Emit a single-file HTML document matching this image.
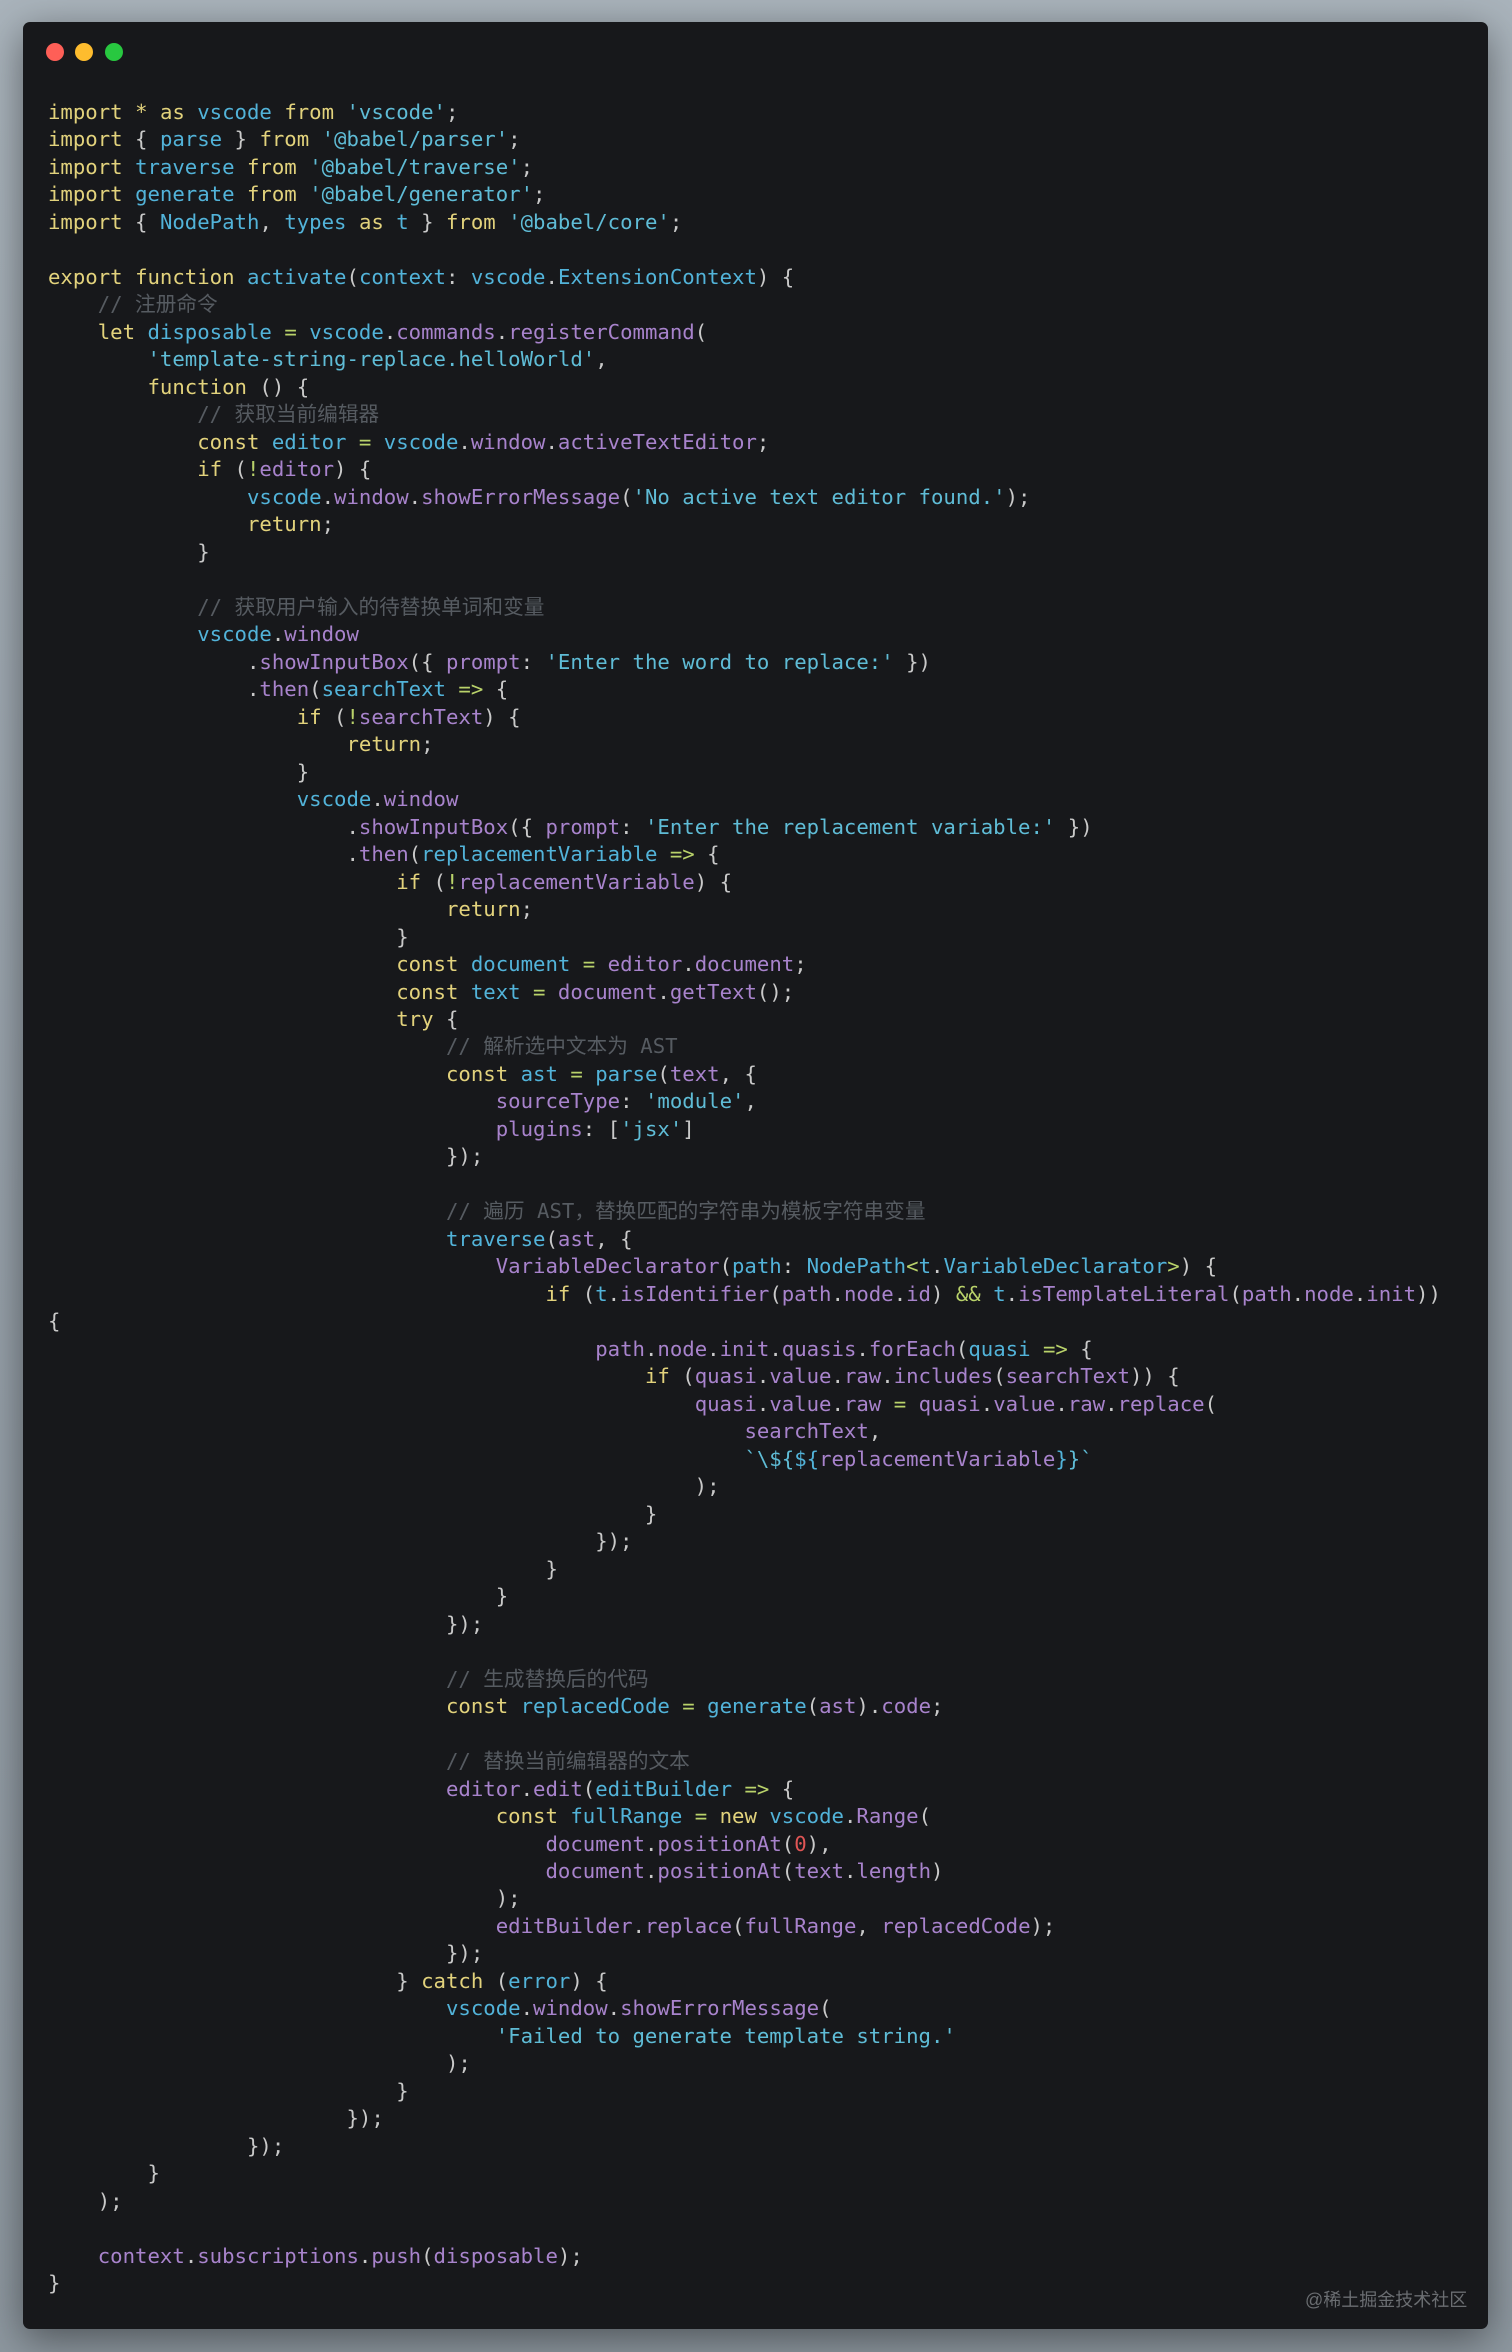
<!DOCTYPE html>
<html><head><meta charset="utf-8"><style>
html,body{margin:0;padding:0}
body{width:1512px;height:2352px;background:linear-gradient(180deg,#a9b3bb 0%,#97a1aa 50%,#8d979f 100%);position:relative;overflow:hidden}
.win{position:absolute;left:23px;top:22px;width:1465px;height:2307px;background:#17181b;border-radius:7px;box-shadow:0 10px 40px rgba(0,0,0,.45)}
.dot{position:absolute;top:21px;width:18px;height:18px;border-radius:50%}
pre{position:absolute;left:48px;top:99px;margin:0;font-family:"DejaVu Sans Mono","Liberation Mono","Noto Sans CJK SC",monospace;font-size:20.67px;line-height:27.49px;color:#c9c9c9;white-space:pre}
.k{color:#e2d27c}.v{color:#52b3d9}.p{color:#a883cc}.s{color:#5fbcd6}.c{color:#565b61}.o{color:#b9d26a}.n{color:#e05555}
.wm{position:absolute;left:1305px;top:2286px;font-family:"Liberation Sans","Noto Sans CJK SC",sans-serif;font-size:18px;color:#6a6d71}
</style></head><body>
<div class="win">
<div class="dot" style="left:23px;background:#fe5f57"></div>
<div class="dot" style="left:52px;background:#febc2e"></div>
<div class="dot" style="left:82px;background:#28c840"></div>
</div>
<pre><span class="k">import</span> <span class="k">*</span> <span class="k">as</span> <span class="v">vscode</span> <span class="k">from</span> <span class="s">'vscode'</span>;
<span class="k">import</span> { <span class="v">parse</span> } <span class="k">from</span> <span class="s">'@babel/parser'</span>;
<span class="k">import</span> <span class="v">traverse</span> <span class="k">from</span> <span class="s">'@babel/traverse'</span>;
<span class="k">import</span> <span class="v">generate</span> <span class="k">from</span> <span class="s">'@babel/generator'</span>;
<span class="k">import</span> { <span class="v">NodePath</span>, <span class="v">types</span> <span class="k">as</span> <span class="v">t</span> } <span class="k">from</span> <span class="s">'@babel/core'</span>;

<span class="k">export</span> <span class="k">function</span> <span class="v">activate</span>(<span class="v">context</span>: <span class="v">vscode</span>.<span class="v">ExtensionContext</span>) {
    <span class="c">// 注册命令</span>
    <span class="k">let</span> <span class="v">disposable</span> <span class="o">=</span> <span class="v">vscode</span>.<span class="p">commands</span>.<span class="p">registerCommand</span>(
        <span class="s">'template-string-replace.helloWorld'</span>,
        <span class="k">function</span> () {
            <span class="c">// 获取当前编辑器</span>
            <span class="k">const</span> <span class="v">editor</span> <span class="o">=</span> <span class="v">vscode</span>.<span class="p">window</span>.<span class="p">activeTextEditor</span>;
            <span class="k">if</span> (<span class="o">!</span><span class="p">editor</span>) {
                <span class="v">vscode</span>.<span class="p">window</span>.<span class="p">showErrorMessage</span>(<span class="s">'No active text editor found.'</span>);
                <span class="k">return</span>;
            }

            <span class="c">// 获取用户输入的待替换单词和变量</span>
            <span class="v">vscode</span>.<span class="p">window</span>
                .<span class="p">showInputBox</span>({ <span class="p">prompt</span>: <span class="s">'Enter the word to replace:'</span> })
                .<span class="p">then</span>(<span class="v">searchText</span> <span class="o">=&gt;</span> {
                    <span class="k">if</span> (<span class="o">!</span><span class="p">searchText</span>) {
                        <span class="k">return</span>;
                    }
                    <span class="v">vscode</span>.<span class="p">window</span>
                        .<span class="p">showInputBox</span>({ <span class="p">prompt</span>: <span class="s">'Enter the replacement variable:'</span> })
                        .<span class="p">then</span>(<span class="v">replacementVariable</span> <span class="o">=&gt;</span> {
                            <span class="k">if</span> (<span class="o">!</span><span class="p">replacementVariable</span>) {
                                <span class="k">return</span>;
                            }
                            <span class="k">const</span> <span class="v">document</span> <span class="o">=</span> <span class="p">editor</span>.<span class="p">document</span>;
                            <span class="k">const</span> <span class="v">text</span> <span class="o">=</span> <span class="p">document</span>.<span class="p">getText</span>();
                            <span class="k">try</span> {
                                <span class="c">// 解析选中文本为 AST</span>
                                <span class="k">const</span> <span class="v">ast</span> <span class="o">=</span> <span class="v">parse</span>(<span class="p">text</span>, {
                                    <span class="p">sourceType</span>: <span class="s">'module'</span>,
                                    <span class="p">plugins</span>: [<span class="s">'jsx'</span>]
                                });

                                <span class="c">// 遍历 AST，替换匹配的字符串为模板字符串变量</span>
                                <span class="v">traverse</span>(<span class="p">ast</span>, {
                                    <span class="p">VariableDeclarator</span>(<span class="v">path</span>: <span class="v">NodePath</span><span class="o">&lt;</span><span class="v">t</span>.<span class="v">VariableDeclarator</span><span class="o">&gt;</span>) {
                                        <span class="k">if</span> (<span class="v">t</span>.<span class="p">isIdentifier</span>(<span class="p">path</span>.<span class="p">node</span>.<span class="p">id</span>) <span class="o">&amp;&amp;</span> <span class="v">t</span>.<span class="p">isTemplateLiteral</span>(<span class="p">path</span>.<span class="p">node</span>.<span class="p">init</span>))
{
                                            <span class="p">path</span>.<span class="p">node</span>.<span class="p">init</span>.<span class="p">quasis</span>.<span class="p">forEach</span>(<span class="v">quasi</span> <span class="o">=&gt;</span> {
                                                <span class="k">if</span> (<span class="p">quasi</span>.<span class="p">value</span>.<span class="p">raw</span>.<span class="p">includes</span>(<span class="p">searchText</span>)) {
                                                    <span class="p">quasi</span>.<span class="p">value</span>.<span class="p">raw</span> <span class="o">=</span> <span class="p">quasi</span>.<span class="p">value</span>.<span class="p">raw</span>.<span class="p">replace</span>(
                                                        <span class="p">searchText</span>,
                                                        <span class="s">`\${</span><span class="v">${</span><span class="p">replacementVariable</span><span class="v">}</span><span class="s">}`</span>
                                                    );
                                                }
                                            });
                                        }
                                    }
                                });

                                <span class="c">// 生成替换后的代码</span>
                                <span class="k">const</span> <span class="v">replacedCode</span> <span class="o">=</span> <span class="v">generate</span>(<span class="p">ast</span>).<span class="p">code</span>;

                                <span class="c">// 替换当前编辑器的文本</span>
                                <span class="p">editor</span>.<span class="p">edit</span>(<span class="v">editBuilder</span> <span class="o">=&gt;</span> {
                                    <span class="k">const</span> <span class="v">fullRange</span> <span class="o">=</span> <span class="k">new</span> <span class="v">vscode</span>.<span class="p">Range</span>(
                                        <span class="p">document</span>.<span class="p">positionAt</span>(<span class="n">0</span>),
                                        <span class="p">document</span>.<span class="p">positionAt</span>(<span class="p">text</span>.<span class="p">length</span>)
                                    );
                                    <span class="p">editBuilder</span>.<span class="p">replace</span>(<span class="p">fullRange</span>, <span class="p">replacedCode</span>);
                                });
                            } <span class="k">catch</span> (<span class="v">error</span>) {
                                <span class="v">vscode</span>.<span class="p">window</span>.<span class="p">showErrorMessage</span>(
                                    <span class="s">'Failed to generate template string.'</span>
                                );
                            }
                        });
                });
        }
    );

    <span class="p">context</span>.<span class="p">subscriptions</span>.<span class="p">push</span>(<span class="p">disposable</span>);
}</pre>
<div class="wm">@稀土掘金技术社区</div>
</body></html>
